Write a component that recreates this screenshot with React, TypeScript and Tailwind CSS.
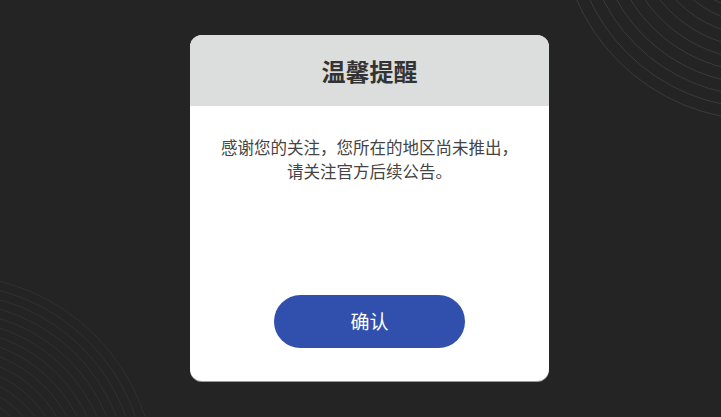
import React from 'react';

const topRadii = Array.from({ length: 13 }, (_, i) => 200 - i * 12);
const bottomRadii = Array.from({ length: 14 }, (_, i) => 205 - i * 9);

const Arcs: React.FC = () => (
  <svg className="absolute inset-0" width="721" height="417" viewBox="0 0 721 417" fill="none">
    {topRadii.map((r) => (
      <circle key={`t${r}`} cx="760" cy="-80" r={r} stroke="#3a3a3a" strokeWidth="1" />
    ))}
    {bottomRadii.map((r) => (
      <circle key={`b${r}`} cx="-50" cy="480" r={r} stroke="#303030" strokeWidth="1" />
    ))}
  </svg>
);

export default function App() {
  return (
    <div
      className="relative w-[721px] h-[417px] overflow-hidden bg-[#242424]"
      style={{ fontFamily: '"Noto Sans CJK SC", "Noto Sans", sans-serif' }}
    >
      <Arcs />
      <div className="relative flex h-full items-center justify-center pl-[18px] pb-px">
        {/* Dialog */}
        <div className="flex h-[346px] w-[359px] flex-col overflow-hidden rounded-[12px] bg-white shadow-[0_1px_0_#9a9a9a]">
          <div className="flex h-[71px] items-center justify-center bg-[#dcdedd]">
            <h2 className="text-[24px] font-bold text-[#333333]">温馨提醒</h2>
          </div>
          <div className="flex flex-1 flex-col items-center pt-[29px] pb-[33px]">
            <p className="text-center text-[16.5px] leading-[24px] text-[#444444]">
              感谢您的关注，您所在的地区尚未推出，
              <br />
              请关注官方后续公告。
            </p>
            <button className="mt-auto flex h-[53px] w-[191px] items-center justify-center rounded-full bg-[#3150ad] text-[19px] text-white">
              确认
            </button>
          </div>
        </div>
      </div>
    </div>
  );
}
